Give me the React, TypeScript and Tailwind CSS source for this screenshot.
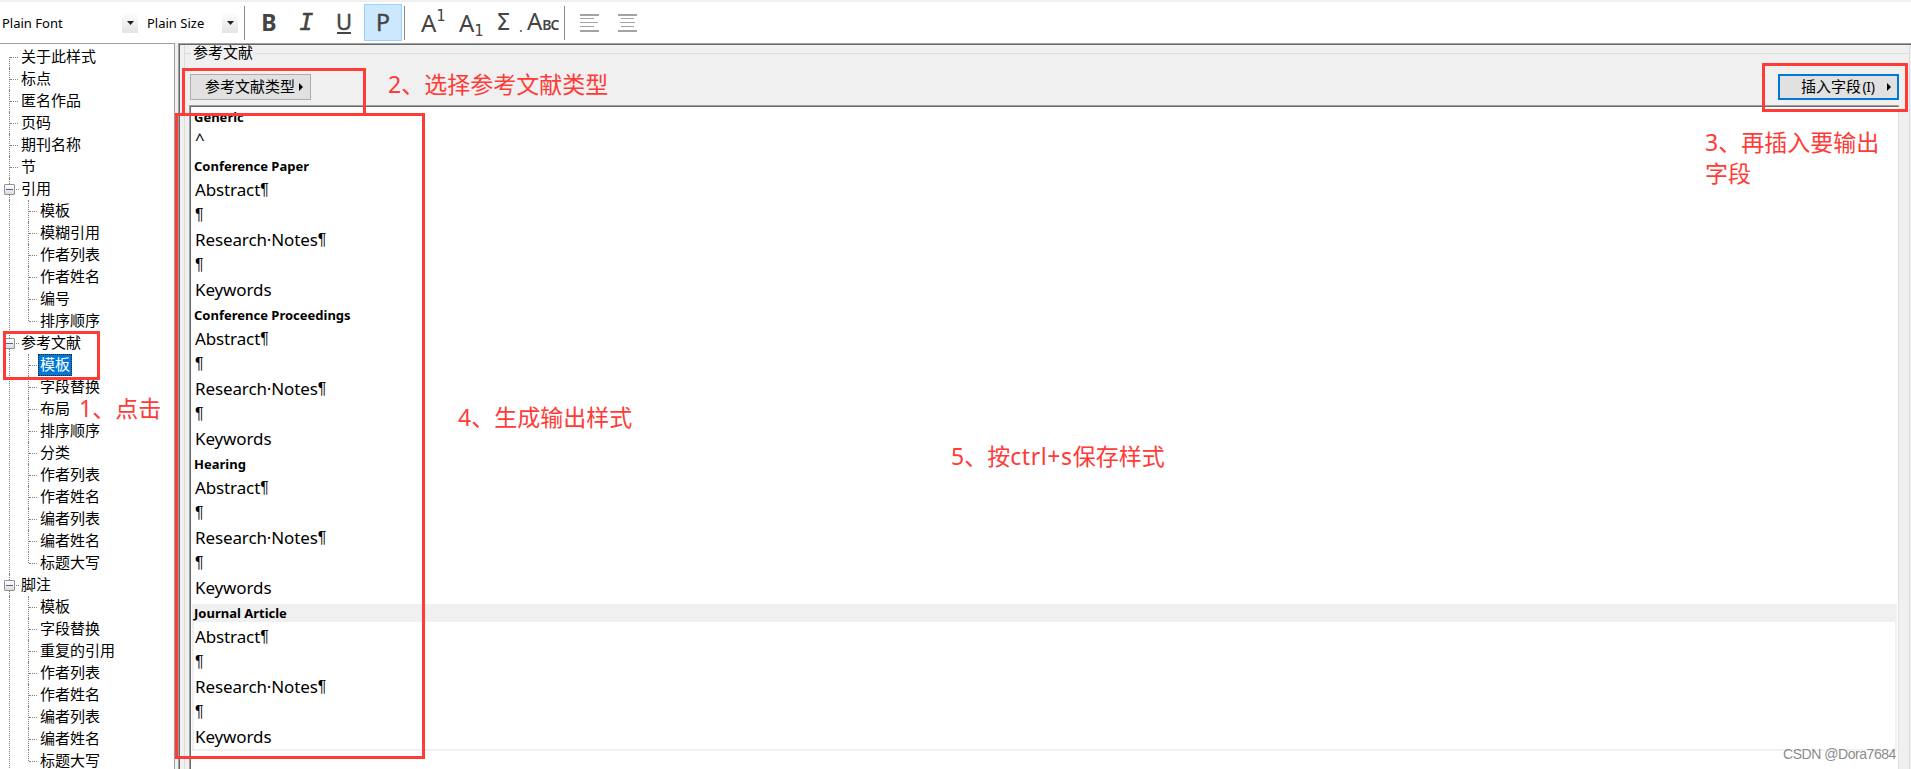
import { clsx } from "clsx";

interface TreeGroup {
  label: string;
  children: string[];
}

interface TemplateBlock {
  title: string;
  lines: string[];
  active?: boolean;
}

const rootItems = ["关于此样式", "标点", "匿名作品", "页码", "期刊名称", "节"];

const groups: TreeGroup[] = [
  {
    label: "引用",
    children: ["模板", "模糊引用", "作者列表", "作者姓名", "编号", "排序顺序"],
  },
  {
    label: "参考文献",
    children: [
      "模板",
      "字段替换",
      "布局",
      "排序顺序",
      "分类",
      "作者列表",
      "作者姓名",
      "编者列表",
      "编者姓名",
      "标题大写",
    ],
  },
  {
    label: "脚注",
    children: [
      "模板",
      "字段替换",
      "重复的引用",
      "作者列表",
      "作者姓名",
      "编者列表",
      "编者姓名",
      "标题大写",
    ],
  },
];

const fieldLines = ["Abstract¶", "¶", "Research·Notes¶", "¶", "Keywords"];

const blocks: TemplateBlock[] = [
  { title: "Generic", lines: ["^"] },
  { title: "Conference Paper", lines: fieldLines },
  { title: "Conference Proceedings", lines: fieldLines },
  { title: "Hearing", lines: fieldLines },
  { title: "Journal Article", lines: fieldLines, active: true },
];

const FontSelect = ({ label, className }: { label: string; className: string }) => (
  <div className={clsx("flex h-[21px] items-center justify-between", className)}>
    <span className="text-[13px] leading-[22px] whitespace-nowrap">{label}</span>
    <span className="flex h-[21px] w-4 items-center justify-center bg-gradient-to-b from-white to-[#e4e4e4]">
      <svg width="7" height="4" viewBox="0 0 7 4">
        <path d="M0 0h7L3.5 4z" fill="#222" />
      </svg>
    </span>
  </div>
);

const Separator = ({ className }: { className?: string }) => (
  <div className={clsx("h-[34px] w-px bg-[#8a8a8a]", className)} />
);

const AlignIcon = ({ centered }: { centered?: boolean }) => (
  <svg width="19" height="18" viewBox="0 0 19 18" shapeRendering="crispEdges">
    {[0, 4, 8, 12, 16].map((y, i) => {
      const short = i % 2 === 1;
      const w = short ? (centered ? 13 : 14) : i === 2 ? (centered ? 15 : 18) : 19;
      return (
        <rect
          key={y}
          x={centered ? (19 - w) / 2 : 0}
          y={y}
          width={w}
          height={i === 0 || i === 4 ? 2 : 1}
          fill="#a3a3a3"
        />
      );
    })}
  </svg>
);

const Toolbar = () => (
  <div className="flex h-[43px] items-center border-t-2 border-[#f0f0f0] bg-white font-['Noto_Sans',sans-serif] text-black">
    <FontSelect label="Plain Font" className="ml-[2px] w-[136px]" />
    <FontSelect label="Plain Size" className="ml-[9px] w-[91px]" />
    <Separator className="ml-[6px]" />
    <div className="ml-[5px] flex h-[37px] items-center text-center text-[23px] leading-[37px] text-[#444]">
      <span className="w-[38px] font-bold">B</span>
      <span className="w-[37px] font-['DejaVu_Sans_Mono',monospace] text-[23px] italic [-webkit-text-stroke:0.5px_#444]">
        I
      </span>
      <span className="flex w-[38px] flex-col items-center">
        <span className="h-[18px] text-[22px] leading-[18px] [-webkit-text-stroke:0.4px_#444]">U</span>
        <span className="mt-[2px] h-[2px] w-[14px] bg-[#444]" />
      </span>
      <span className="ml-px h-[37px] w-[38px] border border-[#99d1ff] bg-[#cce8ff] leading-[34px] [-webkit-text-stroke:0.4px_#444]">
        P
      </span>
    </div>
    <Separator className="ml-[2px]" />
    <div className="flex h-[37px] items-center text-[24px] leading-[35px] text-[#444]">
      <span className="ml-[16px] flex w-[38px]">
        A
        <span className="-mt-[6px] font-['DejaVu_Sans_Mono',monospace] text-[15px]">1</span>
      </span>
      <span className="flex w-[37px]">
        A
        <span className="-mb-[9px] pt-[9px] font-['DejaVu_Sans_Mono',monospace] text-[15px]">1</span>
      </span>
      <span className="w-[21px] font-['DejaVu_Sans',sans-serif] text-[23px]">Σ</span>
      <span className="w-[10px] pt-2 pl-[2px] text-[14px] leading-[29px]">.</span>
      <span className="flex w-[30px] items-baseline">
        A<span className="text-[14px] font-semibold tracking-[-1px]">BC</span>
      </span>
    </div>
    <Separator className="ml-[7px]" />
    <div className="ml-[15px] flex gap-[19px]">
      <AlignIcon />
      <AlignIcon centered />
    </div>
  </div>
);

const TreeLeaf = ({
  label,
  last,
  selected,
}: {
  label: string;
  last: boolean;
  selected?: boolean;
}) => (
  <div className="flex h-[22px] items-center">
    <span
      className={clsx(
        "w-px self-start border-l border-dotted border-[#808080]",
        last ? "h-[11px]" : "h-[22px]"
      )}
    />
    <span className="h-px w-2 border-t border-dotted border-[#808080]" />
    <span
      className={clsx(
        "ml-px h-[22px] px-[2px] leading-[19px]",
        selected &&
          "bg-[#0078d7] text-white outline-1 -outline-offset-1 outline-dotted outline-[#222]"
      )}
    >
      {label}
    </span>
  </div>
);

const StyleTree = () => (
  <div className="h-full w-[175px] overflow-hidden border-t border-r border-[#a0a0a0] bg-white pt-[2px] text-[15px] whitespace-nowrap">
    {rootItems.map((item, i) => (
      <div key={item} className="flex h-[22px] items-center pl-[9px]">
        <span
          className={clsx(
            "w-px border-l border-dotted border-[#808080]",
            i === 0 ? "h-[11px] self-end" : "h-[22px]"
          )}
        />
        <span className="h-px w-2 border-t border-dotted border-[#808080]" />
        <span className="ml-[3px] h-[22px] leading-[19px]">{item}</span>
      </div>
    ))}
    {groups.map((group) => (
      <div key={group.label}>
        <div className="flex h-[22px] items-center pl-[4px]">
          <span className="flex h-[22px] w-[11px] flex-col items-center">
            <span className="h-[6px] border-l border-dotted border-[#808080]" />
            <span className="flex h-[11px] w-[11px] items-center justify-center rounded-[1px] border border-[#919191] bg-gradient-to-b from-white to-[#dcdcdc]">
              <span className="h-px w-[7px] bg-[#4b63a7]" />
            </span>
            <span className="h-[5px] border-l border-dotted border-[#808080]" />
          </span>
          <span className="ml-px h-px w-[3px] border-t border-dotted border-[#808080]" />
          <span className="ml-[2px] h-[22px] leading-[19px]">{group.label}</span>
        </div>
        <div className="ml-[9px] border-l border-dotted border-[#808080] pl-[18px]">
          {group.children.map((child, i) => (
            <TreeLeaf
              key={child}
              label={child}
              last={i === group.children.length - 1}
              selected={group.label === "参考文献" && child === "模板"}
            />
          ))}
        </div>
      </div>
    ))}
  </div>
);

const MenuArrow = () => (
  <svg width="4" height="8" viewBox="0 0 4 8">
    <path d="M0 0l4 4-4 4z" fill="#000" />
  </svg>
);

const TemplateLine = ({ text }: { text: string }) => (
  <div className={clsx("flex h-[25px]", text === "^" ? "leading-[21px]" : "leading-[25px]")}>
    <span className="tracking-[-0.12px]">{text.replace("¶", "")}</span>
    {text.endsWith("¶") && (
      <span className="font-['Liberation_Sans',sans-serif] text-[16px] leading-[25px]">¶</span>
    )}
  </div>
);

const TemplateEditor = () => (
  <div className="flex-1 overflow-hidden border-t border-l border-[#a0a0a0]">
    <div className="h-full border-t border-r border-l border-t-[#696969] border-r-[#e3e3e3] border-l-[#696969] bg-white pt-px pr-px pl-px">
      {blocks.map((block) => (
        <div key={block.title} className="mb-[2px]">
          <div
            className={clsx(
              "h-[18px] pl-[2px] font-['Noto_Sans',sans-serif] text-[13px] leading-[18px] font-bold",
              block.active && "bg-[#f0f0f0]"
            )}
          >
            {block.title}
          </div>
          <div
            className={clsx(
              "border-x-2 border-b-2 pt-[2px] pl-px font-['Noto_Sans',sans-serif] text-[17px]",
              block.active ? "border-[#f0f0f0]" : "border-transparent"
            )}
          >
            {block.lines.map((line, i) => (
              <TemplateLine key={i} text={line} />
            ))}
          </div>
        </div>
      ))}
    </div>
  </div>
);

const BibliographyPanel = () => (
  <div className="h-full flex-1 border-t border-l border-[#a0a0a0]">
    <div className="h-full border-t border-l border-[#696969] pr-px pl-1">
      <div className="flex h-full flex-col border-x border-[#dcdcdc]">
        <div className="flex h-[17px] items-center">
          <span className="h-px w-[6px] bg-[#dcdcdc]" />
          <span className="h-[17px] px-[2px] text-[15px] leading-[13px]">参考文献</span>
          <span className="h-px flex-1 bg-[#dcdcdc]" />
        </div>
        <div className="mt-[12px] flex h-[26px] justify-between pr-[10px] pl-[5px] text-[15px]">
          <button className="flex w-[121px] items-center border border-[#adadad] bg-[#e1e1e1] pl-[14px]">
            <span className="mr-[4px] h-[24px] leading-[21px]">参考文献类型</span>
            <MenuArrow />
          </button>
          <button className="flex w-[121px] items-center border-2 border-[#0078d7] bg-[#e1e1e1] pl-[21px]">
            <span className="h-[22px] leading-[19px]">插入字段</span>
            <span className="mr-[11px] w-[15px] font-['Noto_Sans',sans-serif] text-[14px] leading-[22px] tracking-[-0.3px]">
              (I)
            </span>
            <MenuArrow />
          </button>
        </div>
        <div className="mt-[5px] flex min-h-0 flex-1 pr-[10px] pl-[4px]">
          <TemplateEditor />
        </div>
      </div>
    </div>
  </div>
);

const noteClass =
  "absolute font-['Noto_Sans','Noto_Sans_CJK_SC',sans-serif] text-[23px] leading-[31px] whitespace-nowrap text-[#ff3b38]";
const frameClass = "absolute border-[3px] border-[#ff3b38]";

// Step-by-step hints drawn on top of the window
const Annotations = () => (
  <div className="pointer-events-none">
    <div className={clsx(frameClass, "top-[331px] left-[3px] h-[49px] w-[97px]")} />
    <div className={clsx(frameClass, "top-[68px] left-[182px] h-[48px] w-[184px]")} />
    <div className={clsx(frameClass, "top-[63px] left-[1762px] h-[49px] w-[146px]")} />
    <div className={clsx(frameClass, "top-[113px] left-[175px] h-[646px] w-[250px]")} />
    <div className={clsx(noteClass, "top-[393px] left-[79px]")}>1、点击</div>
    <div className={clsx(noteClass, "top-[69px] left-[388px]")}>2、选择参考文献类型</div>
    <div className={clsx(noteClass, "top-[127px] left-[1705px]")}>
      3、再插入要输出
      <br />
      字段
    </div>
    <div className={clsx(noteClass, "top-[402px] left-[458px]")}>4、生成输出样式</div>
    <div className={clsx(noteClass, "top-[441px] left-[951px]")}>
      5、按<span className="tracking-[0.6px]">ctrl+s</span>保存样式
    </div>
    <div className="absolute top-[745px] left-[1783px] font-['Liberation_Sans',sans-serif] text-[14px] leading-[18px] tracking-[-0.45px] whitespace-nowrap text-[#8c8c8c]">
      CSDN @Dora7684
    </div>
  </div>
);

export default function App() {
  return (
    <div className="relative flex h-[769px] w-[1911px] flex-col overflow-hidden bg-[#f0f0f0] font-['Noto_Sans_CJK_SC',sans-serif] text-black">
      <Toolbar />
      <div className="flex min-h-0 flex-1 gap-[3px]">
        <StyleTree />
        <BibliographyPanel />
      </div>
      <Annotations />
    </div>
  );
}
